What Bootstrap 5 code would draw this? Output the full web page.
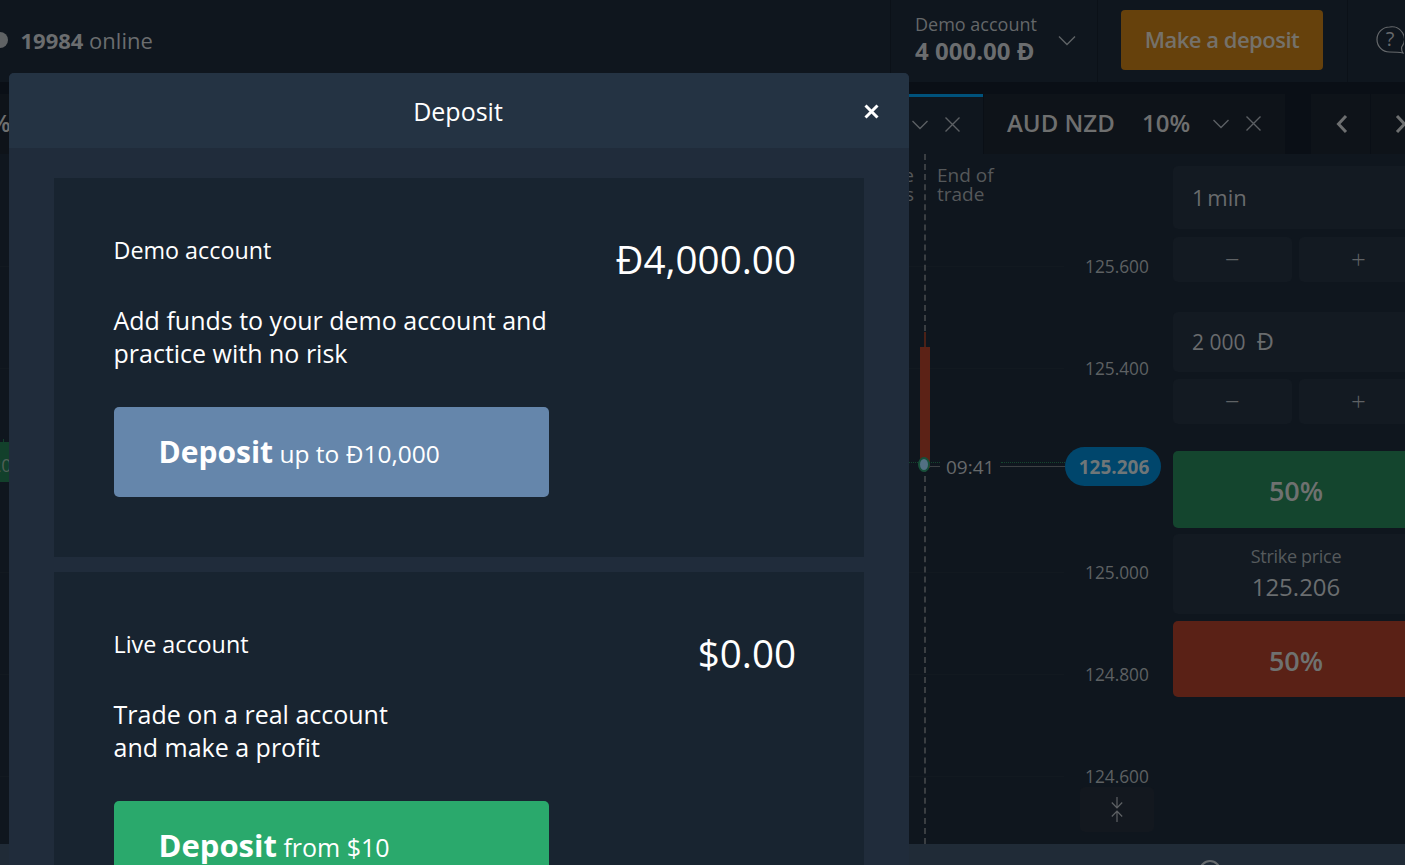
<!DOCTYPE html>
<html lang="en">

<head>
    <meta charset="UTF-8">
    <meta name="viewport" content="width=device-width, initial-scale=1.0">
    <title>Deposit</title>
    <link href="https://cdn.jsdelivr.net/npm/bootstrap@5.3.2/dist/css/bootstrap.min.css" rel="stylesheet">
    <style>
        html, body { height: 100%; }

        body {
            font-family: "Open Sans", "Liberation Sans", sans-serif;
            background-color: #0f161e;
            color: #6b6d6f;
            overflow: hidden;
        }

        .app-shell { width: 1405px; height: 865px; overflow: hidden; position: relative; }

        /* top bar */
        .top-bar { height: 82px; background-color: #0f161e; flex: none; }
        .online-text { font-size: 22px; padding-left: 20.500px; padding-top: 23px; line-height: 34px; position: relative; }
        .online-dot { position: absolute; left: -8px; top: 32px; width: 16px; height: 16px; border-radius: 50%; background: #5f6264; }
        .acct-cell { width: 207px; margin-left: auto; border-left: 1px solid #0b1118; padding: 12px 0 0 24px; position: relative; }
        .acct-label { font-size: 18px; line-height: 25px; color: #646769; }
        .acct-value { font-size: 24px; line-height: 27px; font-weight: 700; color: #6b6d6f; }
        .acct-chevron { position: absolute; left: 167px; top: 35px; }
        .deposit-cell { width: 251px; border-left: 1px solid #0b1118; border-right: 1px solid #0b1118; padding: 10px 0 0 23px; }
        .make-deposit { width: 202px; height: 60px; background-color: #66410c; border-radius: 4px; font-size: 22px; font-weight: 600; color: #75716a; line-height: 58px; text-align: center; letter-spacing: -.5px; }
        .help-cell { width: 57px; padding: 26px 0 0 28px; }

        /* tabs */
        .tab-strip { height: 72px; background-color: #0a0f16; padding-top: 12px; flex: none; }
        .tab-item { height: 60px; background-color: #0e1319; font-size: 24px; font-weight: 600; color: #6e6f6f; position: relative; overflow: hidden; }
        .tab-first { width: 500px; flex: none; }
        .tab-first-pct { position: absolute; left: -10px; top: 11px; line-height: 36px; }
        .tab-active { width: 482px; margin-left: 1px; background-color: #0f161e; border-top: 3px solid #00527c; flex: none; }
        .tab-plain { width: 301px; margin-left: 1px; flex: none; }
        .tab-pair { position: absolute; left: 23px; top: 11px; line-height: 36px; }
        .tab-pct { position: absolute; left: 158px; top: 11px; line-height: 36px; }
        .tab-icon { position: absolute; }
        .tab-nav { width: 59px; height: 60px; background-color: #0e1319; flex: none; margin-left: 1px; }
        .tab-nav-first { margin-left: 26px; padding-left: 2px; }

        /* chart and side panel */
        .work-area { height: 690px; flex: none; }
        .chart-pane { width: 1173px; position: relative; flex: none; }
        .grid-line { position: absolute; left: 0; width: 1064px; height: 1px; background-color: #121920; }
        .price-tag { position: absolute; left: 1085px; font-size: 17.300px; line-height: 22px; color: #5e6163; }
        .end-line { position: absolute; left: 924px; top: 0; bottom: 0; border-left: 2px dashed #3a3e42; }
        .end-label { position: absolute; top: 12px; font-size: 19px; line-height: 19px; color: #55585a; }
        .end-label-left { left: 814px; width: 100px; text-align: right; }
        .end-label-right { left: 937px; }
        .candle-red { position: absolute; left: 920px; top: 193px; width: 10px; height: 121px; background-color: #5c2216; }
        .candle-wick { position: absolute; left: 924px; top: 178px; width: 2px; height: 16px; background-color: #4b2117; }
        .now-dot { position: absolute; left: 918px; top: 303px; width: 12px; height: 15px; border-radius: 50%; background-color: #527083; border: 2px solid #17503a; }
        .now-line { position: absolute; top: 312px; height: 1px; background-color: #3d4144; }
        .now-dots { position: absolute; top: 308px; border-top: 1px dotted #14452e; }
        .now-time { position: absolute; left: 946px; top: 301px; font-size: 19px; line-height: 24px; color: #66696b; }
        .price-pill { position: absolute; left: 1065px; top: 293px; width: 96px; height: 39px; border-radius: 20px; background-color: #00466c; font-size: 19px; font-weight: 700; color: #6f7678; line-height: 41px; text-align: center; padding-left: 2px; }
        .candle-green { position: absolute; left: 0; top: 288px; width: 9px; height: 40px; background-color: #12402b; overflow: hidden; font-size: 18px; line-height: 46px; color: #4f5f57; text-indent: -9px; }
        .green-wick { position: absolute; left: 3px; top: 285px; width: 1px; height: 3px; background-color: #12402b; }
        .zoom-btn { position: absolute; left: 1080px; top: 633px; width: 74px; height: 45px; border-radius: 5px; background-color: #13181f; display: flex; align-items: center; justify-content: center; }

        .side-pane { width: 250px; padding-top: 12px; flex: none; }
        .field-box { background-color: #131a22; border-radius: 5px; font-size: 21px; padding-left: 19px; color: #696b6d; }
        .field-time { height: 63px; line-height: 62px; font-size: 22px; word-spacing: -3px; }
        .field-amount { height: 60px; line-height: 60px; }
        .field-amount span { font-size: 24px; line-height: 20px; }
        .step-btn { width: 119px; height: 45px; background-color: #131a22; border-radius: 5px; flex: none; display: flex; align-items: center; justify-content: center; font-size: 26px; font-weight: 300; color: #5f6265; }
        .step-row { gap: 7px; margin-top: 8px; }
        .step-row-first { margin-bottom: 30px; }
        .step-row-last { margin-top: 7px; margin-bottom: 27px; }
        .trade-btn { border-radius: 5px; font-size: 27px; font-weight: 600; color: #6f7170; text-align: center; padding-right: 4px; }
        .trade-up { height: 77px; background-color: #14452e; line-height: 80px; }
        .trade-down { height: 76px; background-color: #5a2116; line-height: 79px; }
        .strike-box { height: 80px; margin: 6px 0 7px; background-color: #131a22; border-radius: 5px; text-align: center; padding-right: 4px; }
        .strike-label { font-size: 18px; line-height: 24px; padding-top: 10px; letter-spacing: -.3px; color: #565a5d; }
        .strike-value { font-size: 24px; line-height: 34px; padding-top: 2px; color: #6a6d6f; }

        .bottom-strip { height: 21px; background-color: #202b37; position: relative; }
        .bottom-icon { position: absolute; left: 1199px; top: 16px; width: 22px; height: 22px; border: 2px solid #666a6d; border-radius: 50%; }

        /* deposit dialog */
        .deposit-dialog { position: absolute; left: 9px; top: 73px; width: 900px; height: 792px; background-color: #202c3b; border-radius: 5px 5px 0 0; overflow: hidden; }
        .dialog-head { height: 75px; background-color: #243343; color: #fff; font-size: 25px; line-height: 77px; text-align: center; padding-right: 2px; position: relative; }
        .dialog-close { position: absolute; left: 854px; top: 30px; line-height: 0; }
        .dialog-body { padding: 30px 45px 0; }
        .acct-card { height: 379px; background-color: #182430; padding: 56px 68px 0 60px; color: #fff; margin-bottom: 15px; }
        .acct-title { font-size: 23.300px; line-height: 32px; margin-left: -.5px; }
        .acct-balance { font-size: 38.600px; line-height: 50px; }
        .acct-note { font-size: 25px; line-height: 33px; margin-top: 38px; margin-left: -.5px; }
        .acct-btn { width: 435px; height: 90px; border-radius: 5px; margin-top: 37px; padding-left: 44.500px; line-height: 90px; font-size: 24.500px; color: #fff; }
        .acct-btn b { font-size: 30px; font-weight: 700; }
        .btn-demo { background-color: #6586ab; }
        .btn-live { background-color: #2aa96c; font-size: 25px; line-height: 88px; }
        .btn-live b { font-size: 31px; }
    </style>
</head>

<body>
    <div class="app-shell d-flex flex-column">
        <!-- Top bar -->
        <div class="top-bar d-flex">
            <div class="online-text"><span class="online-dot"></span><b>19984</b> online</div>
            <div class="acct-cell">
                <div class="acct-label">Demo account</div>
                <div class="acct-value">4 000.00 Đ</div>
                <svg class="acct-chevron" width="18" height="12" viewBox="0 0 18 12" fill="none" stroke="#5f6366" stroke-width="1.4"><path d="M1 1.5 9 9.5 17 1.5" /></svg>
            </div>
            <div class="deposit-cell">
                <div class="make-deposit">Make a deposit</div>
            </div>
            <div class="help-cell">
                <svg width="28" height="28" viewBox="0 0 28 28" fill="none" stroke="#66696c" stroke-width="1.2"><path d="M13.500 1a12.500 12.500 0 1 0 0 25c4 0 9 0 13.500 1-1.500-1.500-1.500-4-1.300-6A12.500 12.500 0 0 0 13.500 1Z" /><text x="14" y="20" text-anchor="middle" font-size="20" fill="#66696c" stroke="none" font-family="Open Sans">?</text></svg>
            </div>
        </div>

        <!-- Asset tabs -->
        <div class="tab-strip d-flex">
            <div class="tab-item tab-first"><span class="tab-first-pct">%</span></div>
            <div class="tab-item tab-active">
                <svg class="tab-icon" style="left: 411px; top: 23px" width="16" height="10" viewBox="0 0 16 10" fill="none" stroke="#5c6064" stroke-width="1.4"><path d="M.5 1 8 8.500 15.500 1" /></svg>
                <svg class="tab-icon" style="left: 444px; top: 20px" width="15" height="15" viewBox="0 0 15 15" fill="none" stroke="#5c6064" stroke-width="1.400"><path d="M.5.500l14 14M14.500.500l-14 14" /></svg>
            </div>
            <div class="tab-item tab-plain">
                <span class="tab-pair">AUD NZD</span>
                <span class="tab-pct">10%</span>
                <svg class="tab-icon" style="left: 229px; top: 25px" width="16" height="10" viewBox="0 0 16 10" fill="none" stroke="#5c6064" stroke-width="1.4"><path d="M.5 1 8 8.500 15.500 1" /></svg>
                <svg class="tab-icon" style="left: 262px; top: 22px" width="15" height="15" viewBox="0 0 15 15" fill="none" stroke="#5c6064" stroke-width="1.4"><path d="M.5.500l14 14M14.500.500l-14 14" /></svg>
            </div>
            <div class="tab-nav tab-nav-first d-flex align-items-center justify-content-center">
                <svg width="12" height="20" viewBox="0 0 12 20" fill="none" stroke="#6d6f70" stroke-width="3"><path d="M10 2 2.500 10 10 18" /></svg>
            </div>
            <div class="tab-nav d-flex align-items-center ps-4">
                <svg width="12" height="20" viewBox="0 0 12 20" fill="none" stroke="#6d6f70" stroke-width="3"><path d="M2 2 9.500 10 2 18" /></svg>
            </div>
        </div>

        <!-- Chart + side panel -->
        <div class="work-area d-flex">
            <div class="chart-pane">
                <div class="grid-line" style="top: 112px"></div>
                <div class="grid-line" style="top: 214px"></div>
                <div class="grid-line" style="top: 418px"></div>
                <div class="grid-line" style="top: 520px"></div>
                <div class="grid-line" style="top: 622px"></div>
                <div class="end-line"></div>
                <div class="end-label end-label-left">Trade<br>closes</div>
                <div class="end-label end-label-right">End of<br>trade</div>
                <div class="price-tag" style="top: 102px">125.600</div>
                <div class="price-tag" style="top: 204px">125.400</div>
                <div class="price-tag" style="top: 408px">125.000</div>
                <div class="price-tag" style="top: 510px">124.800</div>
                <div class="price-tag" style="top: 612px">124.600</div>
                <div class="green-wick"></div>
                <div class="candle-green">20</div>
                <div class="candle-wick"></div>
                <div class="candle-red"></div>
                <div class="now-dots" style="left: 909px; width: 31px"></div>
                <div class="now-dots" style="left: 1001px; width: 64px"></div>
                <div class="now-line" style="left: 930px; width: 10px"></div>
                <div class="now-line" style="left: 1000px; width: 65px"></div>
                <div class="now-dot"></div>
                <div class="now-time">09:41</div>
                <div class="price-pill">125.206</div>
                <div class="zoom-btn">
                    <svg width="12" height="25" viewBox="0 0 12 25" fill="none" stroke="#5f6265" stroke-width="1.200"><path d="M6 0v11M.8 5.500 6 11 11.200 5.500M6 25V14M.8 19.500 6 14 11.200 19.500" /></svg>
                </div>
            </div>
            <div class="side-pane">
                <div class="field-box field-time">1 min</div>
                <div class="d-flex step-row step-row-first">
                    <div class="step-btn">−</div>
                    <div class="step-btn">+</div>
                </div>
                <div class="field-box field-amount">2 000&nbsp; <span>Đ</span></div>
                <div class="d-flex step-row step-row-last">
                    <div class="step-btn">−</div>
                    <div class="step-btn">+</div>
                </div>
                <div class="trade-btn trade-up">50%</div>
                <div class="strike-box">
                    <div class="strike-label">Strike price</div>
                    <div class="strike-value">125.206</div>
                </div>
                <div class="trade-btn trade-down">50%</div>
            </div>
        </div>
        <div class="bottom-strip"><span class="bottom-icon"></span></div>

        <!-- Deposit dialog -->
        <div class="deposit-dialog">
            <div class="dialog-head">
                Deposit
                <span class="dialog-close">
                    <svg width="17" height="17" viewBox="0 0 17 17" fill="none" stroke="#fff" stroke-width="3"><path d="M2.500 2.500l12 12M14.500 2.500l-12 12" /></svg>
                </span>
            </div>
            <div class="dialog-body">
                <div class="acct-card d-flex justify-content-between">
                    <div>
                        <div class="acct-title">Demo account</div>
                        <div class="acct-note">Add funds to your demo account and<br>practice with no risk</div>
                        <div class="acct-btn btn-demo"><b>Deposit</b> up to Đ10,000</div>
                    </div>
                    <div class="acct-balance">Đ4,000.00</div>
                </div>
                <div class="acct-card d-flex justify-content-between">
                    <div>
                        <div class="acct-title">Live account</div>
                        <div class="acct-note">Trade on a real account<br>and make a profit</div>
                        <div class="acct-btn btn-live"><b>Deposit</b> from $10</div>
                    </div>
                    <div class="acct-balance">$0.00</div>
                </div>
            </div>
        </div>
    </div>

    <script src="https://cdn.jsdelivr.net/npm/bootstrap@5.3.2/dist/js/bootstrap.bundle.min.js"></script>
</body>

</html>
